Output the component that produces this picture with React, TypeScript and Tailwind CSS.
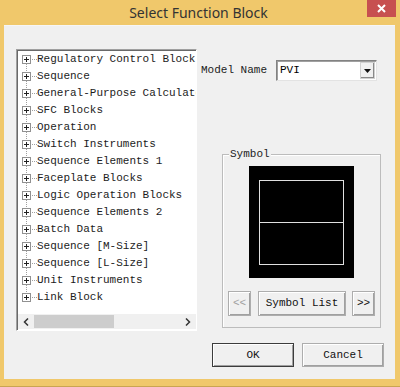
import React from "react";

const items = [
  "Regulatory Control Block",
  "Sequence",
  "General-Purpose Calculator",
  "SFC Blocks",
  "Operation",
  "Switch Instruments",
  "Sequence Elements 1",
  "Faceplate Blocks",
  "Logic Operation Blocks",
  "Sequence Elements 2",
  "Batch Data",
  "Sequence [M-Size]",
  "Sequence [L-Size]",
  "Unit Instruments",
  "Link Block",
];

function Connector({ first, last }: { first: boolean; last: boolean }) {
  return (
    <svg width="15" height="17" viewBox="0 0 15 17" className="shrink-0">
      {!first && <line x1="4.5" y1="0" x2="4.5" y2="4" stroke="#a0a0a0" strokeDasharray="1 1" />}
      {!last && <line x1="4.5" y1="13" x2="4.5" y2="17" stroke="#a0a0a0" strokeDasharray="1 1" />}
      <line x1="10" y1="8.5" x2="15" y2="8.5" stroke="#a0a0a0" strokeDasharray="1 1" />
      <rect x="0.5" y="4.5" width="8" height="8" fill="#fff" stroke="#919191" />
      <line x1="2" y1="8.5" x2="7" y2="8.5" stroke="#222" />
      <line x1="4.5" y1="6" x2="4.5" y2="11" stroke="#222" />
    </svg>
  );
}

const mono = "font-['Liberation_Mono','Courier_New',monospace] text-[11px]";

function RaisedButton({
  children,
  className,
  disabled,
  isDefault,
}: {
  children: React.ReactNode;
  className: string;
  disabled?: boolean;
  isDefault?: boolean;
}) {
  return (
    <div
      className={`${className} ${
        isDefault ? "border border-[#3c3c3c]" : "border border-[#adadad]"
      } bg-[#f0f0f0] flex items-center justify-center shadow-[inset_1px_1px_0_#ffffff,inset_-1px_-1px_0_#a0a0a0] ${mono} ${
        disabled ? "text-[#a0a0a0]" : "text-[#111]"
      }`}
    >
      {children}
    </div>
  );
}

export default function App() {
  return (
    <div className="w-[400px] h-[387px] bg-[#f0c86b] flex flex-col overflow-hidden">
      {/* title bar */}
      <div className="h-[25px] flex items-start shrink-0">
        <div className="flex-1 h-[25px] flex items-center justify-center pl-[30px] font-['Noto_Sans',sans-serif] text-[14px] text-[#333333]">
          Select Function Block
        </div>
        <div className="w-[29px] h-[17px] bg-[#c75050] flex items-center justify-center mr-[4px]">
          <svg width="9" height="9" viewBox="0 0 9 9">
            <path d="M1 1 L8 8 M8 1 L1 8" stroke="#fff" strokeWidth="2" />
          </svg>
        </div>
      </div>
      {/* client */}
      <div className="mx-[4px] w-[391px] h-[354px] bg-[#f0f0f0] flex shrink-0 border-t border-[#f6f6f6]">
        {/* tree */}
        <div className="ml-[12px] mt-[23px] w-[181px] h-[282px] border-t border-l border-[#a0a0a0] border-r border-b border-r-[#ffffff] border-b-[#ffffff] shadow-[inset_1px_1px_0_#696969] bg-white flex flex-col overflow-hidden shrink-0">
          <div className="flex-1 flex flex-col pt-[1px] pl-[5px] overflow-hidden">
            {items.map((t, i) => (
              <div key={t} className="h-[17px] flex items-center shrink-0 whitespace-nowrap">
                <Connector first={i === 0} last={i === items.length - 1} />
                <span className={`${mono} text-[#1c1c1c] leading-[17px]`}>{t}</span>
              </div>
            ))}
          </div>
          <div className="h-[15px] ml-[1px] mb-[1px] bg-[#f0f0f0] flex items-center shrink-0">
            <div className="w-[16px] flex justify-center">
              <svg width="6" height="8" viewBox="0 0 6 8">
                <path d="M5 0.5 L1.5 4 L5 7.5" stroke="#333" strokeWidth="1.5" fill="none" />
              </svg>
            </div>
            <div className="w-[80px] h-[13px] bg-[#cdcdcd]" />
            <div className="flex-1" />
            <div className="w-[16px] flex justify-center">
              <svg width="6" height="8" viewBox="0 0 6 8">
                <path d="M1 0.5 L4.5 4 L1 7.5" stroke="#333" strokeWidth="1.5" fill="none" />
              </svg>
            </div>
          </div>
        </div>
        {/* right column */}
        <div className="ml-[4px] flex flex-col">
          <div className="mt-[34px] h-[21px] flex items-center">
            <span className={`${mono} text-[#1c1c1c] w-[75px]`}>Model Name</span>
            <div className="w-[101px] h-[21px] bg-white border border-t-[#828282] border-l-[#828282] border-r-[#e3e3e3] border-b-[#e3e3e3] shadow-[inset_1px_1px_0_#a0a0a0] flex items-center">
              <span className={`${mono} text-black pl-[3px] flex-1`}>PVI</span>
              <div className="w-[15px] h-[17px] mr-[1px] bg-[#f0f0f0] border border-[#d0d0d0] shadow-[inset_-1px_-1px_0_#8a8a8a] flex items-center justify-center">
                <svg width="7" height="4" viewBox="0 0 7 4">
                  <path d="M0 0 H7 L3.5 4 Z" fill="#111" />
                </svg>
              </div>
            </div>
          </div>
          {/* group box */}
          <div className="ml-[21px] mt-[73px] w-[159px] h-[174px] border border-[#bcbcbc] shadow-[inset_1px_1px_0_#ffffff] flex flex-col items-start">
            <span className={`${mono} text-[#1c1c1c] bg-[#f0f0f0] px-[1px] ml-[6px] -mt-[8px] leading-[14px]`}>
              Symbol
            </span>
            <div className="ml-[26px] mt-[5px] w-[105px] h-[112px] bg-black flex items-center justify-center">
              <div className="w-[85px] h-[85px] border border-[#e0e0e0] flex flex-col">
                <div className="flex-1 border-b border-[#e0e0e0]" />
                <div className="flex-1" />
              </div>
            </div>
            <div className="mt-[13px] ml-[5px] flex gap-[7px]">
              <RaisedButton className="w-[23px] h-[25px]" disabled>
                &lt;&lt;
              </RaisedButton>
              <RaisedButton className="w-[88px] h-[25px]">Symbol List</RaisedButton>
              <RaisedButton className="w-[23px] h-[25px] -ml-[1px]">&gt;&gt;</RaisedButton>
            </div>
          </div>
          <div className="ml-[11px] mt-[15px] flex gap-[8px]">
            <RaisedButton className="w-[82px] h-[24px]" isDefault>
              OK
            </RaisedButton>
            <RaisedButton className="w-[82px] h-[24px]">Cancel</RaisedButton>
          </div>
        </div>
      </div>
      <div className="flex-1" />
      <div className="h-[1px] bg-[#c9a552]" />
    </div>
  );
}
